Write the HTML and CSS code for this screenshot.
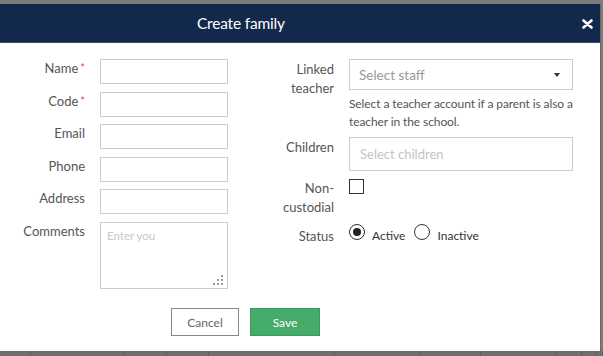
FILE: index.html
```html
<!DOCTYPE html>
<html lang="en">
<head>
  <meta charset="UTF-8" />
  <title>Create family</title>
  <link rel="stylesheet" href="styles.css">
</head>
<body>

  <div class="modal">
    <div class="modal-header">
      <h1>Create family</h1>
      <span class="close">
        <svg width="11" height="10" viewBox="0 0 11 10"><path d="M1.5 1.5 L9.5 8.5 M9.5 1.5 L1.5 8.5" stroke="#fff" stroke-width="2.6" stroke-linecap="round"/></svg>
      </span>
    </div>

    <div class="modal-body">
      <div class="form">
        <!-- left column -->
        <div class="col col-left">
          <div class="row">
            <label>Name<span class="req">*</span></label>
            <div class="input"></div>
          </div>
          <div class="row">
            <label>Code<span class="req">*</span></label>
            <div class="input"></div>
          </div>
          <div class="row">
            <label>Email</label>
            <div class="input"></div>
          </div>
          <div class="row">
            <label>Phone</label>
            <div class="input"></div>
          </div>
          <div class="row">
            <label>Address</label>
            <div class="input"></div>
          </div>
          <div class="row">
            <label>Comments</label>
            <div class="input textarea">
              <span class="placeholder">Enter you</span>
              <svg class="grip" width="10" height="10" viewBox="0 0 10 10" fill="#9a9a9a">
                <rect x="8" y="0" width="2" height="2"/>
                <rect x="4" y="4" width="2" height="2"/><rect x="8" y="4" width="2" height="2"/>
                <rect x="0" y="8" width="2" height="2"/><rect x="4" y="8" width="2" height="2"/><rect x="8" y="8" width="2" height="2"/>
              </svg>
            </div>
          </div>
        </div>

        <!-- right column -->
        <div class="col col-right">
          <div class="row row-linked">
            <label>Linked teacher</label>
            <div class="field">
              <div class="select">
                <span>Select staff</span>
                <span class="caret"></span>
              </div>
              <p class="help">Select a teacher account if a parent is also a teacher in the school.</p>
            </div>
          </div>
          <div class="row">
            <label>Children</label>
            <div class="select multi"><span>Select children</span></div>
          </div>
          <div class="row row-check">
            <label>Non-custodial</label>
            <span class="checkbox"></span>
          </div>
          <div class="row row-radio">
            <label>Status</label>
            <div class="radios">
              <span class="radio checked"></span><span class="radio-text">Active</span>
              <span class="radio"></span><span class="radio-text">Inactive</span>
            </div>
          </div>
        </div>
      </div>

      <div class="actions">
        <button class="btn btn-cancel">Cancel</button>
        <button class="btn btn-save">Save</button>
      </div>
    </div>
  </div>

  <div class="backdrop-table">
    <div class="cell c1"></div>
    <div class="cell c2"></div>
    <div class="cell c3"></div>
    <div class="cell c4"></div>
    <div class="cell c5"></div>
    <div class="cell c6"></div>
    <div class="cell c7"></div>
    <div class="cell c8"></div>
    <div class="cell c9"></div>
    <div class="cell c10"></div>
    <div class="cell c11"></div>
  </div>

</body>
</html>
```

FILE: styles.css
```css
body {
  font-family: 'Lato', 'Liberation Sans', sans-serif;
  background-color: #7c7c7c;
  margin: 0;
  padding: 0;
  width: 603px;
  height: 356px;
  overflow: hidden;
}

.modal {
  width: 601px;
  height: 347px;
  margin-top: 4px;
  background: white;
  border-right: 1px solid #6a6a6a;
  box-sizing: border-box;
}

.modal-header {
  background-color: #13294b;
  height: 39px;
  border-bottom: 1px solid #3d4f6c;
  box-sizing: border-box;
  display: flex;
  align-items: center;
  position: relative;
}
.modal-header h1 {
  margin: 0 0 0 197px;
  font-size: 15.5px;
  font-weight: normal;
  color: white;
  letter-spacing: -0.2px;
}
.close {
  position: absolute;
  right: 7px;
  top: 15px;
  line-height: 0;
}

.modal-body {
  padding-top: 16px;
}

.form {
  display: flex;
}
.col-left {
  width: 240px;
}
.col-right {
  padding-left: 34px;
}
.col {
  display: flex;
  flex-direction: column;
}
.col-left .row {
  margin-bottom: 7.5px;
}

.row {
  display: flex;
  align-items: flex-start;
}
label {
  font-size: 13px;
  color: #555;
  text-align: right;
  line-height: 19px;
  padding-top: 1px;
  margin-right: 15px;
}
.col-left label {
  width: 85px;
  padding-top: 0;
}
.col-right label {
  width: 60px;
}
.req {
  color: #d9534f;
  margin-left: 2px;
  font-size: 11px;
  vertical-align: top;
  position: relative;
  top: -1px;
}

.input {
  width: 128px;
  height: 25px;
  border: 1px solid #ccc;
  box-sizing: border-box;
  background: white;
}
.textarea {
  height: 67px;
  position: relative;
  padding: 6px 6px;
}
.placeholder {
  display: block;
  white-space: nowrap;
  font-size: 11.5px;
  color: #c8c8c8;
}
.grip {
  position: absolute;
  right: 4px;
  bottom: 3px;
}

.field {
  width: 224px;
}
.select {
  width: 224px;
  height: 31px;
  border: 1px solid #ccc;
  box-sizing: border-box;
  display: flex;
  align-items: center;
  justify-content: space-between;
  padding: 0 12px 0 9px;
  font-size: 13.5px;
  color: #999;
}
.caret {
  width: 0;
  height: 0;
  border-left: 3px solid transparent;
  border-right: 3px solid transparent;
  border-top: 4px solid #333;
}
.help {
  margin: 5px 0 0;
  font-size: 12px;
  line-height: 18px;
  color: #555;
  letter-spacing: -0.1px;
}
.col-right .row {
  margin-bottom: 8px;
}
.col-right .row-linked {
  margin-bottom: 6px;
}
.row-linked label {
  padding-top: 1px;
}
.multi {
  height: 34px;
  font-size: 13px;
  color: #c4c4c4;
  padding-left: 10px;
}
.col-right .row-check {
  margin-bottom: 7px;
}
.row-check label {
  padding-top: 0;
}
.row-radio label {
  padding-top: 3px;
}
.checkbox {
  width: 15px;
  height: 15px;
  border: 1px solid #333;
  box-sizing: border-box;
  background: white;
}
.radios {
  display: flex;
  align-items: flex-end;
}
.radio {
  width: 16px;
  height: 16px;
  border: 1px solid #333;
  border-radius: 50%;
  box-sizing: border-box;
  position: relative;
}
.radio.checked::after {
  content: '';
  position: absolute;
  top: 3px;
  left: 3px;
  width: 8px;
  height: 8px;
  border-radius: 50%;
  background: #222;
}
.radio-text {
  font-size: 12px;
  color: #333;
  margin: 0 9px 0 7px;
  line-height: 12px;
  position: relative;
  top: 2px;
}

.actions {
  display: flex;
  gap: 11px;
  padding-left: 171px;
  margin-top: 12px;
}
.btn {
  font-family: 'Lato', 'Liberation Sans', sans-serif;
  font-size: 12px;
  height: 28px;
  border-radius: 0;
  cursor: pointer;
}
.btn-cancel {
  width: 68px;
  background: white;
  color: #666;
  border: 1px solid #888;
}
.btn-save {
  width: 70px;
  background: #44ab6b;
  color: white;
  border: 1px solid #3a9a5d;
}

.backdrop-table {
  display: flex;
  height: 5px;
  background: #6e6e6e;
}
.cell {
  border-right: 1px solid #5d5d5d;
}
.c1 { width: 30px; }
.c2 { width: 92px; }
.c3 { width: 43px; }
.c4 { width: 41px; }
.c5 { width: 125px; }
.c6 { width: 84px; }
.c7 { width: 61px; }
.c8 { width: 75px; }
.c9 { width: 24px; }
.c10 { width: 13px; }
.c11 { width: 6px; }
```
